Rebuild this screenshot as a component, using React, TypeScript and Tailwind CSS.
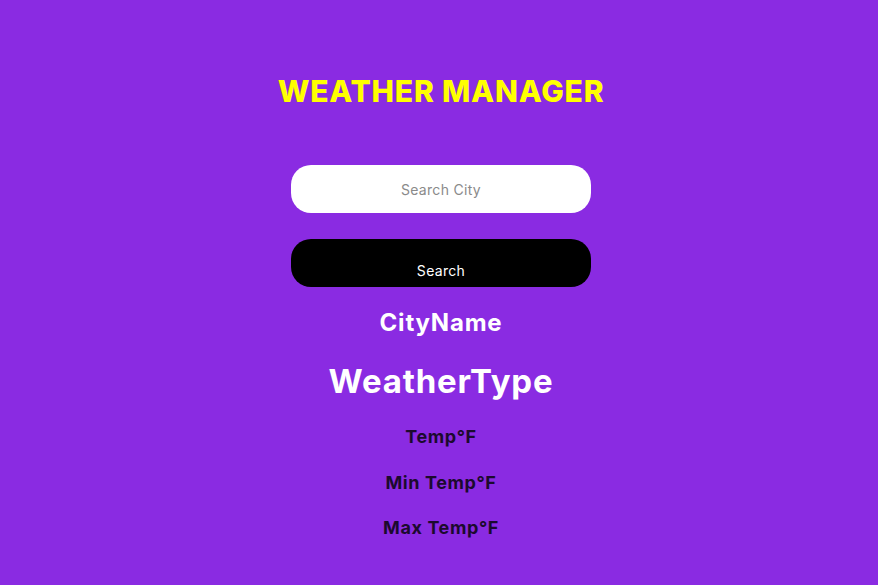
export default function App() {
  return (
    <div
      className="min-h-[585px] w-full bg-[#8a2be2] flex flex-col items-center pl-[4px]"
      style={{ fontFamily: 'Inter, "Noto Sans", sans-serif' }}
    >
      {/* Title */}
      <h1 className="mt-[72px] text-[30px] leading-[38px] font-extrabold text-[#ffff00] tracking-[0.8px]">
        WEATHER MANAGER
      </h1>

      {/* Search form */}
      <input
        type="text"
        placeholder="Search City"
        className="mt-[55px] w-[300px] h-[48px] rounded-[20px] bg-white text-center text-[14px] tracking-[0.3px] text-[#333] placeholder:text-[#8a8a8a] outline-none"
      />
      <button className="mt-[26px] w-[300px] h-[48px] rounded-[20px] bg-black text-white text-[14px] tracking-[0.3px] flex items-end justify-center pb-[6px]">
        Search
      </button>

      {/* Result */}
      <div className="mt-[21px] flex flex-col items-center">
        <h2 className="text-[24px] leading-[30px] font-bold text-white tracking-[0.8px]">CityName</h2>
        <h1 className="mt-[24px] text-[33px] leading-[38px] font-bold text-white tracking-[0.8px]">WeatherType</h1>
        <p className="mt-[25px] text-[18px] leading-[24px] font-bold text-[#1c0a2e] tracking-[0.6px]">Temp°F</p>
        <p className="mt-[22px] text-[18px] leading-[24px] font-bold text-[#1c0a2e] tracking-[0.6px]">Min Temp°F</p>
        <p className="mt-[21px] text-[18px] leading-[24px] font-bold text-[#1c0a2e] tracking-[0.6px]">Max Temp°F</p>
      </div>
    </div>
  )
}
